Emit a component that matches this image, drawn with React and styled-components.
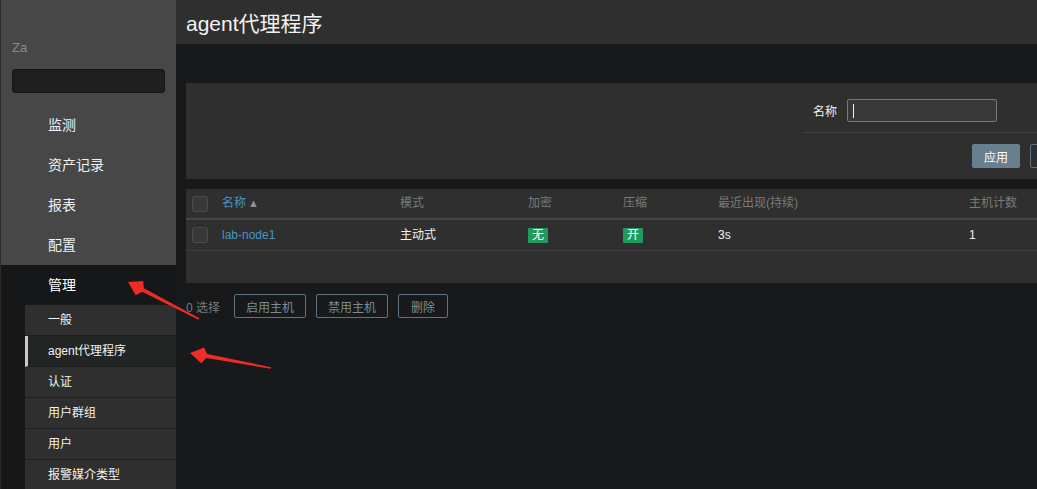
import styled, { createGlobalStyle } from "styled-components";

const GlobalStyle = createGlobalStyle`
  html, body {
    margin: 0;
    padding: 0;
    background: #18191b;
    font-family: "Liberation Sans", Arial, "Noto Sans CJK SC", sans-serif;
    overflow: hidden;
  }
`;

const Page = styled.div`
  position: relative;
  display: flex;
  height: 489px;
  width: 1037px;
  overflow: hidden;
  background: #18191b;
`;

// ---- sidebar ----

const Sidebar = styled.aside`
  width: 176px;
  flex-shrink: 0;
  display: flex;
  flex-direction: column;
  background: #161718;
  border-left: 1px solid #2a2a2a;
  box-sizing: border-box;
`;

const SidebarTop = styled.div`
  background: #474747;
  padding-top: 40px;
`;

const Logo = styled.div`
  padding-left: 11px;
  height: 16px;
  line-height: 16px;
  font-size: 13px;
  color: #858a8e;
`;

const Search = styled.div`
  margin: 13px 11px 12px 11px;
  height: 24px;
  box-sizing: border-box;
  background: #1f1f1f;
  border: 1px solid #151515;
  border-radius: 3px;
`;

const MenuItem = styled.div`
  height: 40px;
  line-height: 40px;
  padding-left: 47px;
  font-size: 14px;
  color: ${(p) => (p.$open ? "#ffffff" : "#f0f0f0")};
  background: ${(p) => (p.$open ? "#161718" : "transparent")};
`;

const SubMenu = styled.div`
  margin-left: 24px;
  display: flex;
  flex-direction: column;
`;

const SubItem = styled.div`
  height: 30px;
  line-height: 30px;
  padding-left: ${(p) => (p.$active ? "20px" : "23px")};
  font-size: 12px;
  color: #f2f2f2;
  background: ${(p) => (p.$active ? "#232424" : "#2f2f2f")};
  border-left: ${(p) => (p.$active ? "3px solid #c9c9c9" : "none")};
  border-bottom: 1px solid #1d1e1f;
  white-space: nowrap;
`;

// ---- main ----

const Main = styled.main`
  flex: 1;
  min-width: 0;
  display: flex;
  flex-direction: column;
`;

const Header = styled.header`
  height: 44px;
  background: #2f2f2f;
  padding-left: 10px;
  display: flex;
  align-items: center;
`;

const Title = styled.h1`
  margin: 0;
  font-size: 21px;
  font-weight: normal;
  color: #f2f2f2;
`;

const Content = styled.div`
  padding: 39px 0 0 10px;
  display: flex;
  flex-direction: column;
`;

const FilterPanel = styled.section`
  background: #2f2f2f;
  height: 96px;
  overflow: hidden;
  display: flex;
`;

const FilterColumn = styled.div`
  margin-left: 617px;
  width: 420px;
  flex-shrink: 0;
  display: flex;
  flex-direction: column;
`;

const FilterRow = styled.div`
  display: flex;
  align-items: center;
  gap: 10px;
  padding: 16px 0 10px 10px;
  border-bottom: 1px solid #3e3e3e;
`;

const Label = styled.label`
  font-size: 12px;
  color: #f2f2f2;
`;

const TextInput = styled.div`
  width: 150px;
  height: 23px;
  box-sizing: border-box;
  background: #383838;
  border: 1px solid #6b7c86;
  border-radius: 2px;
  display: flex;
  align-items: center;
  padding-left: 5px;
`;

const Caret = styled.span`
  width: 1px;
  height: 14px;
  background: #f2f2f2;
`;

const ButtonRow = styled.div`
  display: flex;
  gap: 10px;
  padding: 11px 0 0 169px;
`;

const Button = styled.button`
  height: 24px;
  padding: 0 ${(p) => p.$pad || "11px"};
  box-sizing: border-box;
  border-radius: 2px;
  font-family: inherit;
  font-size: 12px;
  border: 1px solid ${(p) => (p.$primary ? "#687f8d" : "#5d7482")};
  background: ${(p) => (p.$primary ? "#687f8d" : "transparent")};
  color: ${(p) => (p.$primary ? "#ffffff" : "#768d99")};
  width: ${(p) => p.$w || "auto"};
`;

const Table = styled.section`
  margin-top: 10px;
  background: #2f2f2f;
  padding-bottom: 32px;
`;

const Row = styled.div`
  display: grid;
  grid-template-columns: 30px 178px 128px 95px 95px 251px 1fr;
  align-items: center;
  height: ${(p) => (p.$head ? "29px" : "30px")};
  border-bottom: ${(p) => (p.$head ? "2px solid #454545" : "1px solid #3e3e3e")};
`;

const Cell = styled.div`
  padding-left: 6px;
  font-size: 12px;
  line-height: 15px;
  white-space: nowrap;
  color: ${(p) => (p.$link ? "#4796c4" : p.$head ? "#7a7a7a" : "#f2f2f2")};
  display: flex;
  align-items: center;
`;

const Checkbox = styled.span`
  width: 16px;
  height: 16px;
  box-sizing: border-box;
  border: 1px solid #4b4b4b;
  background: #383838;
  border-radius: 2px;
`;

const SortArrow = styled.span`
  margin-left: 2px;
  font-size: 11px;
  color: #8f8f8f;
`;

const Badge = styled.span`
  display: inline-block;
  width: 20px;
  height: 15px;
  line-height: 15px;
  text-align: center;
  background: #1f9c5b;
  color: #ffffff;
  font-size: 12px;
  border-radius: 1px;
`;

const Actions = styled.div`
  display: flex;
  align-items: center;
  padding-top: 11px;
`;

const Selected = styled.span`
  font-size: 12px;
  color: #7a7a7a;
  margin-right: 14px;
`;

const ActionButtons = styled.div`
  display: flex;
  gap: 10px;
`;

const Annotations = styled.svg`
  position: absolute;
  left: 0;
  top: 0;
  pointer-events: none;
`;

const subItems = ["一般", "agent代理程序", "认证", "用户群组", "用户", "报警媒介类型"];

export default function App() {
  return (
    <>
      <GlobalStyle />
      <Page>
        <Sidebar>
          <SidebarTop>
            <Logo>Za</Logo>
            <Search />
            <MenuItem>监测</MenuItem>
            <MenuItem>资产记录</MenuItem>
            <MenuItem>报表</MenuItem>
            <MenuItem>配置</MenuItem>
          </SidebarTop>
          <MenuItem $open>管理</MenuItem>
          <SubMenu>
            {subItems.map((s) => (
              <SubItem key={s} $active={s === "agent代理程序"}>
                {s}
              </SubItem>
            ))}
          </SubMenu>
        </Sidebar>

        <Main>
          <Header>
            <Title>agent代理程序</Title>
          </Header>
          <Content>
            <FilterPanel>
              <FilterColumn>
                <FilterRow>
                  <Label>名称</Label>
                  <TextInput>
                    <Caret />
                  </TextInput>
                </FilterRow>
                <ButtonRow>
                  <Button $primary $w="48px" $pad="0">应用</Button>
                  <Button $pad="14px">重设</Button>
                </ButtonRow>
              </FilterColumn>
            </FilterPanel>

            <Table>
              <Row $head>
                <Cell>
                  <Checkbox />
                </Cell>
                <Cell $link>
                  名称<SortArrow>▲</SortArrow>
                </Cell>
                <Cell $head>模式</Cell>
                <Cell $head>加密</Cell>
                <Cell $head>压缩</Cell>
                <Cell $head>最近出现(持续)</Cell>
                <Cell $head>主机计数</Cell>
              </Row>
              <Row>
                <Cell>
                  <Checkbox />
                </Cell>
                <Cell $link>lab-node1</Cell>
                <Cell>主动式</Cell>
                <Cell>
                  <Badge>无</Badge>
                </Cell>
                <Cell>
                  <Badge>开</Badge>
                </Cell>
                <Cell>3s</Cell>
                <Cell>1</Cell>
              </Row>
            </Table>

            <Actions>
              <Selected>0 选择</Selected>
              <ActionButtons>
                <Button>启用主机</Button>
                <Button>禁用主机</Button>
                <Button $pad="12px">删除</Button>
              </ActionButtons>
            </Actions>
          </Content>
        </Main>

        <Annotations width="1037" height="489" viewBox="0 0 1037 489">
          <polygon
            fill="#ee2b24"
            points="128,282 143.2,281.1 143.9,288.3 199.4,318.3 198.6,319.7 142.1,291.8 135.7,295.2"
          />
          <polygon
            fill="#ee2b24"
            points="190,353 204.2,347.5 207.1,354.1 271.1,367.2 270.9,368.8 206.4,358.1 201.3,363.2"
          />
        </Annotations>
      </Page>
    </>
  );
}
